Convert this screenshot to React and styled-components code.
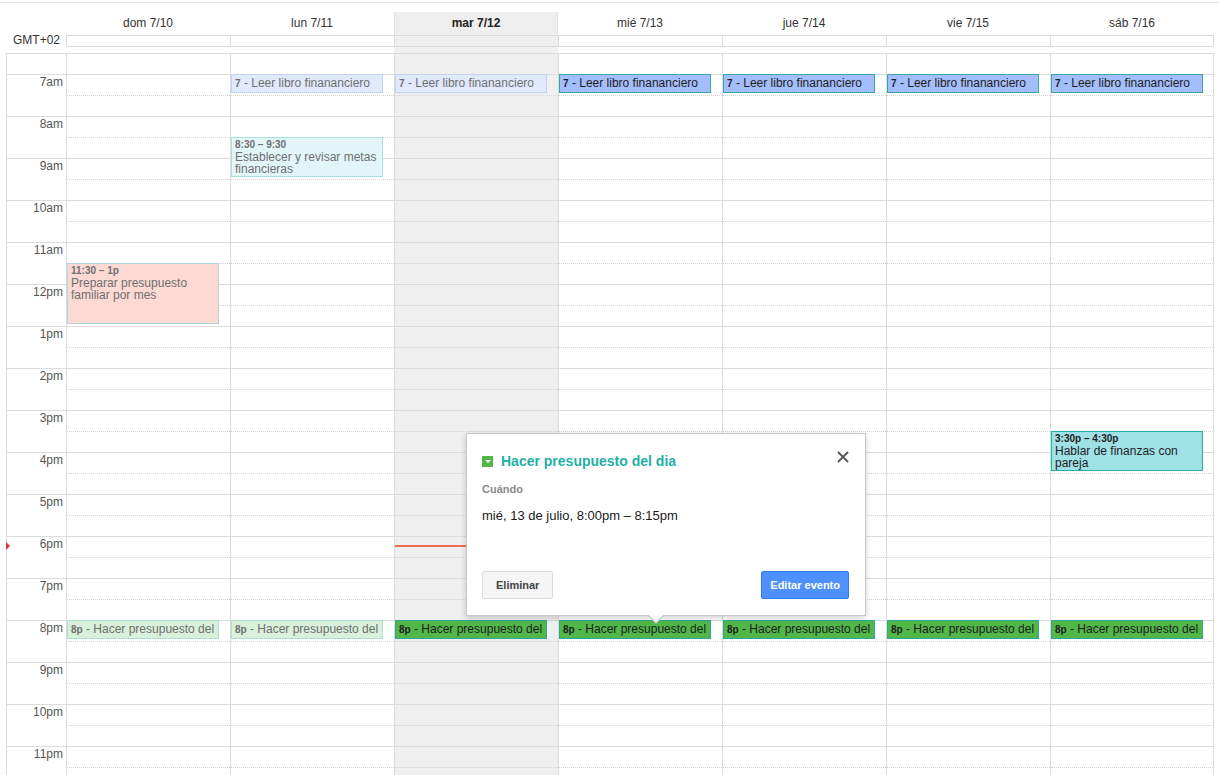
import React from "react";
import styled, { createGlobalStyle, css } from "styled-components";

const HOUR = 42;
const FIRST_HOUR = 6.5;
const NOW = 18 + 14 / 60;

const GlobalStyle = createGlobalStyle`
  html, body {
    margin: 0;
    padding: 0;
    height: 100%;
    overflow: hidden;
    background: #fff;
  }
  body {
    font-family: "Liberation Sans", Arial, sans-serif;
    color: #222;
  }
`;

const palette = {
  blue: { bg: "#a4bdfc", border: "#36a8a6", pastBg: "#e1e9fc", pastBorder: "#bfd4f1" },
  teal: { bg: "#a0e1e6", border: "#2aaea5", pastBg: "#e3f6f7", pastBorder: "#a9e1de" },
  pink: { bg: "#fbd2cc", border: "#e39a90", pastBg: "#fdd9d4", pastBorder: "#acd6e0" },
  green: { bg: "#51b749", border: "#2da897", pastBg: "#d9f1da", pastBorder: "#addfd0" },
};

const readBook = { start: 7, end: 7.25, time: "7", title: "Leer libro finananciero", tone: "blue" };
const budget = { start: 20, end: 20.25, time: "8p", title: "Hacer presupuesto del dia", tone: "green" };

const days = [
  {
    label: "dom 7/10",
    events: [
      { start: 11.5, end: 13, time: "11:30 – 1p", title: "Preparar presupuesto familiar por mes", tone: "pink", past: true },
      { ...budget, past: true },
    ],
  },
  {
    label: "lun 7/11",
    events: [
      { ...readBook, past: true },
      { start: 8.5, end: 9.5, time: "8:30 – 9:30", title: "Establecer y revisar metas financieras", tone: "teal", past: true },
      { ...budget, past: true },
    ],
  },
  { label: "mar 7/12", today: true, events: [{ ...readBook, past: true }, budget] },
  { label: "mié 7/13", events: [readBook, budget] },
  { label: "jue 7/14", events: [readBook, budget] },
  { label: "vie 7/15", events: [readBook, budget] },
  {
    label: "sáb 7/16",
    events: [
      readBook,
      { start: 15.5, end: 16.5, time: "3:30p – 4:30p", title: "Hablar de finanzas con pareja", tone: "teal" },
      budget,
    ],
  },
];

const hours = ["7am", "8am", "9am", "10am", "11am", "12pm", "1pm", "2pm", "3pm", "4pm", "5pm", "6pm", "7pm", "8pm", "9pm", "10pm", "11pm"];

const Page = styled.div`
  position: relative;
  width: 1219px;
  height: 775px;
  padding-top: 2px;
  box-sizing: border-box;
`;

const Calendar = styled.div`
  border-top: 1px solid #e6e6e6;
  padding-top: 9px;
  display: flex;
`;

const Gutter = styled.div`
  width: 66px;
  flex-shrink: 0;
  display: flex;
  flex-direction: column;
`;

const GutterHead = styled.div`
  height: 23px;
`;

const ZoneLabel = styled.div`
  height: 12px;
  line-height: 11px;
  font-size: 12px;
  color: #333;
  text-align: right;
  padding-right: 6px;
`;

const Gap = styled.div`
  height: 6px;
`;

const GutterBody = styled.div`
  position: relative;
  margin-left: 6px;
  border-left: 1px solid #dcdcdc;
`;

const TimeSlot = styled.div`
  box-sizing: border-box;
  height: ${(p) => (p.$half ? HOUR / 2 : HOUR)}px;
  border-top: 1px solid #dcdcdc;
  padding: 0 3px 0 0;
  text-align: right;
  font-size: 12px;
  line-height: 14px;
  color: #555;
`;

const NowMarker = styled.div`
  position: absolute;
  left: -1px;
  width: 0;
  height: 0;
  border-top: 4px solid transparent;
  border-bottom: 4px solid transparent;
  border-left: 4px solid #d0392b;
`;

const DayColumn = styled.div`
  width: 164px;
  flex-shrink: 0;
  display: flex;
  flex-direction: column;
  background: ${(p) => (p.$today ? "#efefef" : "transparent")};
`;

const DayHead = styled.div`
  height: 23px;
  line-height: 22px;
  text-align: center;
  font-size: 12px;
  color: #333;
  font-weight: ${(p) => (p.$today ? "bold" : "normal")};
  ${(p) =>
    p.$today &&
    css`
      color: #222;
      box-shadow: inset 1px 0 #e2e2e2, inset -1px 0 #e2e2e2;
    `}
`;

const gridEdges = css`
  border-left: 1px solid #dcdcdc;
  ${(p) => p.$last && "border-right: 1px solid #dcdcdc;"}
`;

const AllDayCell = styled.div`
  box-sizing: border-box;
  height: 12px;
  border-top: 1px solid #dcdcdc;
  border-bottom: 1px solid #dcdcdc;
  ${gridEdges}
`;

const DayBody = styled.div`
  position: relative;
  ${gridEdges}
`;

const Slot = styled.div`
  box-sizing: border-box;
  height: ${(p) => (p.$half ? HOUR / 2 : HOUR)}px;
  border-top: 1px solid #dcdcdc;
`;

const HalfLine = styled.div`
  height: 20px;
  border-bottom: 1px dotted #d4d4d4;
`;

const NowLine = styled.div`
  position: absolute;
  left: 0;
  right: 0;
  height: 2px;
  background: #e96c55;
`;

const EventBox = styled.div`
  position: absolute;
  left: 0;
  width: 152px;
  box-sizing: border-box;
  overflow: hidden;
  padding: 0 3px;
  font-size: 12px;
  border: 1px solid ${(p) => (p.$past ? palette[p.$tone].pastBorder : palette[p.$tone].border)};
  background: ${(p) => (p.$past ? palette[p.$tone].pastBg : palette[p.$tone].bg)};
  color: ${(p) => (p.$past ? "#6f6f6f" : "#1d1d1d")};
  line-height: ${(p) => (p.$short ? "16px" : "12px")};
`;

const EventTime = styled.span`
  font-size: 10px;
  font-weight: bold;
`;

const EventTimeRow = styled.div`
  font-size: 10px;
  font-weight: bold;
  line-height: 12px;
  padding-top: 1px;
`;

const Popup = styled.div`
  position: absolute;
  left: 466px;
  top: 433px;
  width: 400px;
  height: 183px;
  box-sizing: border-box;
  background: #fff;
  border: 1px solid #c8c8c8;
  box-shadow: 0 2px 6px rgba(0, 0, 0, 0.18);
  padding: 17px 16px 16px 15px;
  display: flex;
  flex-direction: column;

  &::before,
  &::after {
    content: "";
    position: absolute;
    width: 0;
    height: 0;
    border-left: 9px solid transparent;
    border-right: 9px solid transparent;
    left: 180px;
  }
  &::before {
    bottom: -9px;
    border-top: 9px solid #c8c8c8;
  }
  &::after {
    bottom: -7px;
    border-top: 8px solid #fff;
    left: 181px;
    border-left-width: 8px;
    border-right-width: 8px;
  }
`;

const PopupTitle = styled.div`
  display: flex;
  align-items: center;
  gap: 8px;
  height: 20px;
  font-size: 14px;
  font-weight: bold;
  color: #1fb0a6;
`;

const ColorChip = styled.span`
  display: inline-flex;
  align-items: center;
  justify-content: center;
  width: 11px;
  height: 11px;
  background: #51b749;
  &::after {
    content: "";
    border-left: 3px solid transparent;
    border-right: 3px solid transparent;
    border-top: 3px solid #fff;
  }
`;

const CloseButton = styled.button`
  position: absolute;
  top: 15px;
  right: 14px;
  width: 16px;
  height: 16px;
  padding: 0;
  border: 0;
  background: none;
  cursor: pointer;
`;

const FieldLabel = styled.div`
  margin-top: 11px;
  font-size: 11px;
  line-height: 14px;
  font-weight: bold;
  color: #8a8a8a;
`;

const WhenText = styled.div`
  margin-top: 12px;
  font-size: 13px;
  line-height: 16px;
  color: #1a1a1a;
`;

const Footer = styled.div`
  margin-top: auto;
  display: flex;
  justify-content: space-between;
`;

const Button = styled.button`
  height: 28px;
  padding: 0 ${(p) => (p.$primary ? 8 : 13)}px;
  border-radius: 2px;
  font-family: inherit;
  font-size: 11px;
  font-weight: bold;
  cursor: pointer;
  border: 1px solid ${(p) => (p.$primary ? "#3079ed" : "#dcdcdc")};
  background: ${(p) => (p.$primary ? "#4d90fe" : "#f5f5f5")};
  color: ${(p) => (p.$primary ? "#fff" : "#444")};
`;

const Event = ({ ev }) => {
  const top = (ev.start - FIRST_HOUR) * HOUR;
  const height = Math.max((ev.end - ev.start) * HOUR - 2, 19);
  const short = height < 30;
  return (
    <EventBox $tone={ev.tone} $past={ev.past} $short={short} style={{ top, height }}>
      {short ? (
        <>
          <EventTime>{ev.time}</EventTime> - {ev.title}
        </>
      ) : (
        <>
          <EventTimeRow>{ev.time}</EventTimeRow>
          {ev.title}
        </>
      )}
    </EventBox>
  );
};

const Day = ({ day, last }) => (
  <DayColumn $today={day.today}>
    <DayHead $today={day.today}>{day.label}</DayHead>
    <AllDayCell $last={last} />
    <Gap />
    <DayBody $last={last}>
      <Slot $half />
      {hours.map((h) => (
        <Slot key={h}>
          <HalfLine />
        </Slot>
      ))}
      {day.today && <NowLine style={{ top: (NOW - FIRST_HOUR) * HOUR - 1 }} />}
      {day.events.map((ev, i) => (
        <Event key={i} ev={ev} />
      ))}
    </DayBody>
  </DayColumn>
);

export default function App() {
  return (
    <Page>
      <GlobalStyle />
      <Calendar>
        <Gutter>
          <GutterHead />
          <ZoneLabel>GMT+02</ZoneLabel>
          <Gap />
          <GutterBody>
            <TimeSlot $half />
            {hours.map((h) => (
              <TimeSlot key={h}>{h}</TimeSlot>
            ))}
            <NowMarker style={{ top: (NOW - FIRST_HOUR) * HOUR - 4 }} />
          </GutterBody>
        </Gutter>
        {days.map((d, i) => (
          <Day key={d.label} day={d} last={i === days.length - 1} />
        ))}
      </Calendar>

      <Popup>
        <PopupTitle>
          <ColorChip />
          Hacer presupuesto del dia
        </PopupTitle>
        <CloseButton aria-label="Cerrar">
          <svg width="16" height="16" viewBox="0 0 16 16">
            <path d="M3 3 L13 13 M13 3 L3 13" stroke="#555" strokeWidth="1.8" />
          </svg>
        </CloseButton>
        <FieldLabel>Cuándo</FieldLabel>
        <WhenText>mié, 13 de julio, 8:00pm – 8:15pm</WhenText>
        <Footer>
          <Button>Eliminar</Button>
          <Button $primary>Editar evento</Button>
        </Footer>
      </Popup>
    </Page>
  );
}
